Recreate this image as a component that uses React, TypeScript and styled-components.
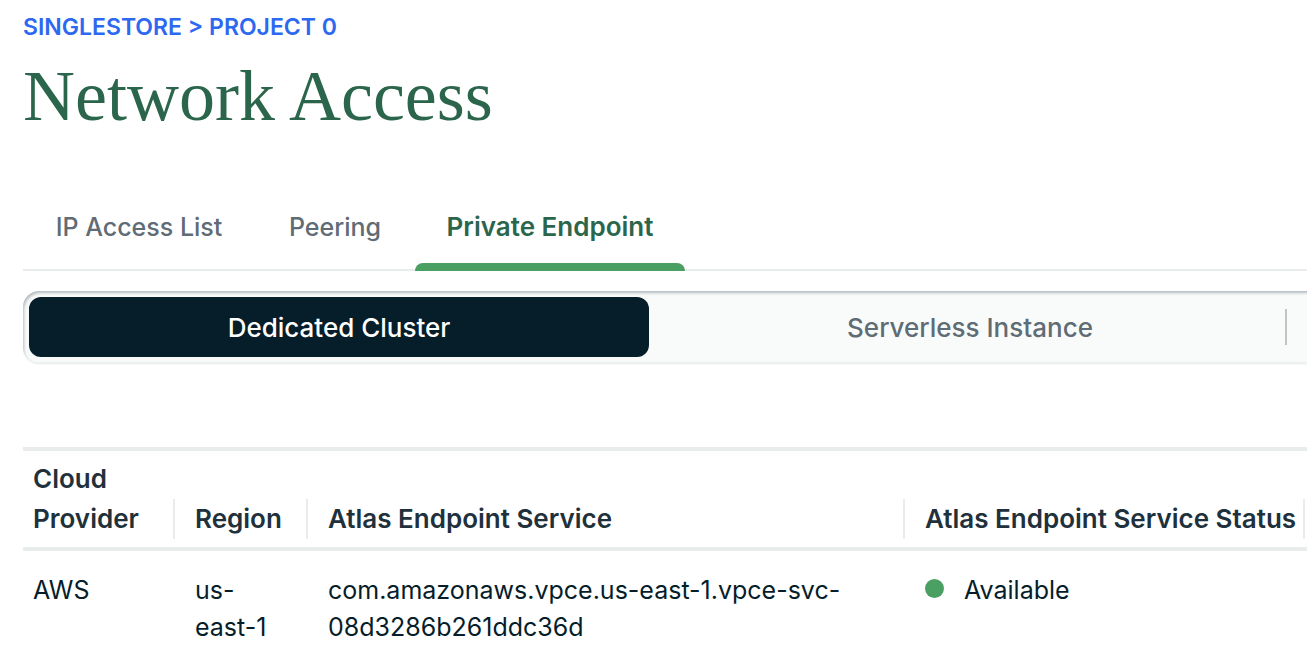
import React, { useState } from "react";
import styled, { createGlobalStyle } from "styled-components";

const GlobalStyle = createGlobalStyle`
  * { box-sizing: border-box; }
  body {
    margin: 0;
    background: #ffffff;
    color: #061d2a;
    font-family: Inter, "Liberation Sans", sans-serif;
    font-size: 25px;
  }
`;

const Page = styled.main`
  padding: 10px 9px 0 23px;
`;

const Breadcrumb = styled.nav`
  font-size: 23px;
  font-weight: 600;
  line-height: 34px;
  white-space: nowrap;
  color: #2d68f0;
`;

const Crumb = styled.a`
  color: inherit;
  text-decoration: none;
`;

const Title = styled.h1`
  margin: 12px 0 0;
  font-family: "Liberation Serif", serif;
  font-size: 72px;
  font-weight: 400;
  line-height: 80px;
  color: #2b664c;
`;

const TabList = styled.div`
  display: flex;
  margin-top: 48px;
  border-bottom: 2px solid #e8edeb;
`;

const Tab = styled.button<{ $active: boolean; $width: number }>`
  position: relative;
  width: ${(p) => p.$width}px;
  height: 85px;
  padding: 0;
  border: 0;
  background: none;
  font: inherit;
  font-size: ${(p) => (p.$active ? 26 : 25)}px;
  font-weight: ${(p) => (p.$active ? 600 : 500)};
  white-space: nowrap;
  color: ${(p) => (p.$active ? "#2b664c" : "#5f6c75")};
  cursor: pointer;

  &::after {
    content: "";
    display: ${(p) => (p.$active ? "block" : "none")};
    position: absolute;
    left: 0;
    right: 0;
    bottom: -2px;
    height: 8px;
    border-radius: 8px 8px 0 0;
    background: #4aa063;
  }
`;

const SegmentedControl = styled.div`
  display: grid;
  grid-template-columns: 155fr 159fr 22px;
  align-items: center;
  margin-top: 20px;
  padding: 6px 0 6px 6px;
  border-radius: 16px 0 0 16px;
  background: #f9fbfa;
  box-shadow: inset 2px 3px 3px -1px #b4bcc0, inset 0 -1px 1px #eef1f0, 0 1px 2px #e3e8e6;
  clip-path: inset(0 0 -6px 0);
`;

const Segment = styled.button<{ $active: boolean }>`
  height: 60px;
  padding: 0;
  border: 0;
  border-radius: 12px;
  background: ${(p) => (p.$active ? "#061d2a" : "transparent")};
  color: ${(p) => (p.$active ? "#ffffff" : "#5f6c75")};
  font: inherit;
  font-size: 26px;
  font-weight: 500;
  cursor: pointer;

  & + & { margin-left: 6px; }
`;

const SegmentDivider = styled.span`
  height: 36px;
  border-left: 2px solid #c1c4c5;
`;

const Table = styled.table`
  width: 100%;
  margin-top: 84px;
  border-collapse: separate;
  border-spacing: 0;
  table-layout: fixed;
`;

const Column = styled.col<{ $width?: number }>`
  width: ${(p) => (p.$width ? `${p.$width}px` : "auto")};
`;

const HeadCell = styled.th`
  padding: 8px 0 8px 20px;
  border-top: 4px solid #e8edeb;
  border-bottom: 4px solid #e8edeb;
  vertical-align: bottom;
  text-align: left;
  font-size: 26px;
  font-weight: 600;
  line-height: 40px;
  color: #21313c;

  &:first-child { padding-left: 10px; }
  &:last-child { padding-right: 2px; white-space: nowrap; }
`;

const HeadLabel = styled.div`
  display: flex;
  align-items: flex-end;
  justify-content: space-between;

  &::after {
    content: "";
    flex: none;
    width: 2px;
    height: 40px;
    background: #e8edeb;
  }
`;

const Cell = styled.td`
  padding: 21px 40px 15px 20px;
  vertical-align: top;
  line-height: 37px;

  &:first-child { padding-left: 10px; }
`;

const Status = styled.span`
  display: flex;
  align-items: center;
  gap: 20px;
`;

const StatusDot = styled.span`
  width: 19px;
  height: 19px;
  margin-bottom: 4px;
  border-radius: 50%;
  background: #4aa063;
`;

const tabs = [
  { label: "IP Access List", width: 232 },
  { label: "Peering", width: 160 },
  { label: "Private Endpoint", width: 270 },
];

const segments = ["Dedicated Cluster", "Serverless Instance"];

const columns = [
  { label: "Cloud Provider", width: 152 },
  { label: "Region", width: 133 },
  { label: "Atlas Endpoint Service" },
  { label: "Atlas Endpoint Service Status", width: 402 },
];

const endpoints = [
  {
    provider: "AWS",
    region: "us-east-1",
    service: "com.amazonaws.vpce.us-east-1.vpce-svc-08d3286b261ddc36d",
    status: "Available",
  },
];

export default function App() {
  const [tab, setTab] = useState("Private Endpoint");
  const [segment, setSegment] = useState("Dedicated Cluster");

  return (
    <>
      <GlobalStyle />
      <Page>
        <Breadcrumb aria-label="Breadcrumb">
          <Crumb href="#organization">SINGLESTORE</Crumb> &gt; <Crumb href="#project">PROJECT 0</Crumb>
        </Breadcrumb>
        <Title>Network Access</Title>
        <TabList role="tablist">
          {tabs.map(({ label, width }) => (
            <Tab
              key={label}
              role="tab"
              aria-selected={tab === label}
              $active={tab === label}
              $width={width}
              onClick={() => setTab(label)}
            >
              {label}
            </Tab>
          ))}
        </TabList>
        <SegmentedControl>
          {segments.map((label) => (
            <Segment
              key={label}
              aria-pressed={segment === label}
              $active={segment === label}
              onClick={() => setSegment(label)}
            >
              {label}
            </Segment>
          ))}
          <SegmentDivider />
        </SegmentedControl>
        <Table>
          <colgroup>
            {columns.map((c) => (
              <Column key={c.label} $width={c.width} />
            ))}
          </colgroup>
          <thead>
            <tr>
              {columns.map((c) => (
                <HeadCell key={c.label} scope="col">
                  <HeadLabel>{c.label}</HeadLabel>
                </HeadCell>
              ))}
            </tr>
          </thead>
          <tbody>
            {endpoints.map((e) => (
              <tr key={e.service}>
                <Cell>{e.provider}</Cell>
                <Cell>{e.region}</Cell>
                <Cell>{e.service}</Cell>
                <Cell>
                  <Status>
                    <StatusDot />
                    {e.status}
                  </Status>
                </Cell>
              </tr>
            ))}
          </tbody>
        </Table>
      </Page>
    </>
  );
}
